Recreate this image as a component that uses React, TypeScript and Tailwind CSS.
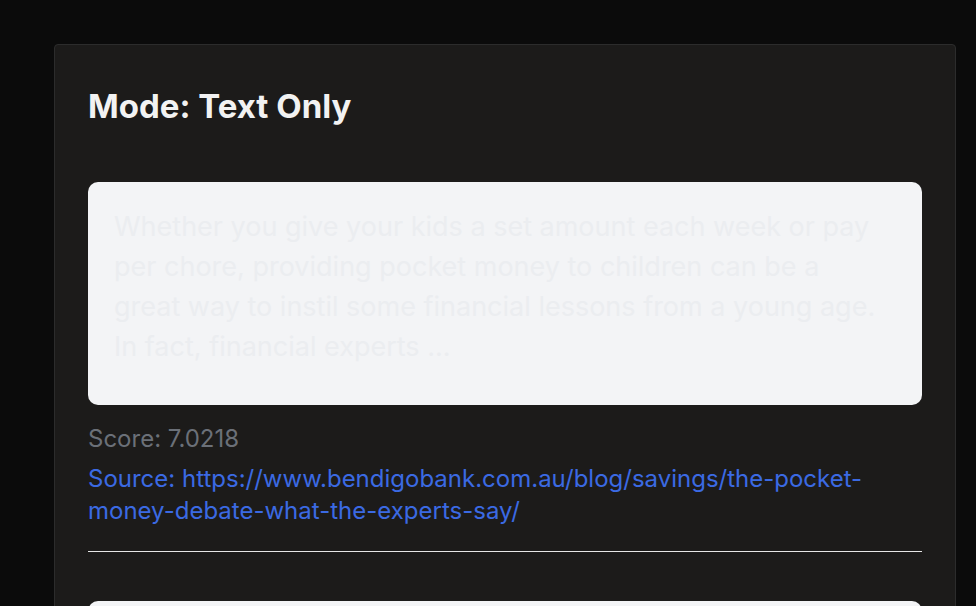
import React from 'react';

interface ResultProps {
  text: string;
  score: string;
  source: string;
}

const Result: React.FC<ResultProps> = ({ text, score, source }) => {
  return <div className="flex flex-col">
      <div className="bg-[#f3f4f6] rounded-[10px] pl-[26px] pr-[40px] pt-[25px] pb-[38px]">
        <p className="text-[#ebedf0] text-[27px] leading-[40px]">{text}</p>
      </div>
      <div className="text-[#6b7078] text-2xl mt-[18px]">Score: {score}</div>
      <a href={source} className="text-[#3b6ae3] text-2xl mt-[8px] break-words">
        Source: {source}
      </a>
      <hr className="border-0 h-px bg-[#e6e6e6] mt-[24px] mb-[49px]" />
    </div>;
};

export default function App() {
  return <div className="min-h-screen bg-[#0b0b0b] pt-[44px] pl-[54px]" style={{ fontFamily: 'Inter, "Noto Sans", sans-serif' }}>
      <section className="w-[902px] bg-[#1c1b1a] border border-[#2c2c2c] rounded-[4px] px-[33px] pt-[41px] pb-8">
        <h2 className="text-[#f2f2f2] text-[33px] leading-[40px] font-bold">Mode: Text Only</h2>
        <div className="mt-[56px] flex flex-col">
          <Result
            text="Whether you give your kids a set amount each week or pay per chore, providing pocket money to children can be a great way to instil some financial lessons from a young age. In fact, financial experts ..."
            score="7.0218"
            source="https://www.bendigobank.com.au/blog/savings/the-pocket-money-debate-what-the-experts-say/"
          />
          <Result
            text="Pocket money can help children learn the value of money and how to manage it ..."
            score="6.8120"
            source="https://www.moneysmart.gov.au/"
          />
        </div>
      </section>
    </div>;
}
